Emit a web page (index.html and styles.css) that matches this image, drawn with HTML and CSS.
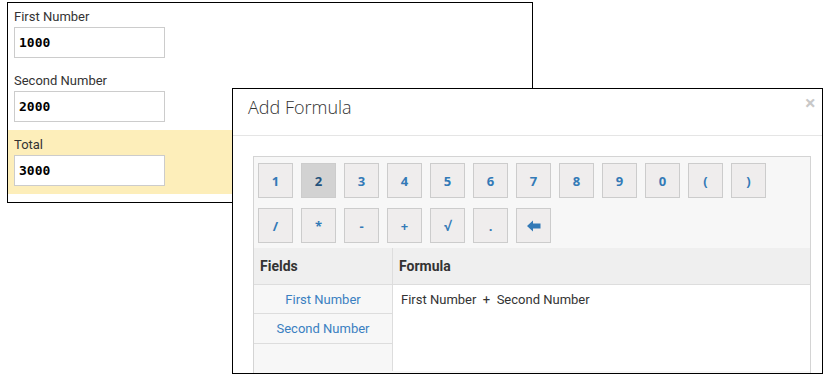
FILE: index.html
```html
<!DOCTYPE html>
<html lang="en">
<head>
    <meta charset="UTF-8">
    <title>Add Formula</title>
    <link rel="stylesheet" href="styles.css">
</head>
<body>
    <div class="form-panel">
        <div class="field">
            <label>First Number</label>
            <input type="text" value="1000">
        </div>
        <div class="field">
            <label>Second Number</label>
            <input type="text" value="2000">
        </div>
        <div class="field total">
            <label>Total</label>
            <input type="text" value="3000">
        </div>
    </div>

    <div class="modal">
        <div class="modal-header">
            <h4>Add Formula</h4>
            <span class="close">&times;</span>
        </div>
        <div class="modal-body">
            <div class="calc">
                <div class="keys">
                    <button>1</button>
                    <button class="active">2</button>
                    <button>3</button>
                    <button>4</button>
                    <button>5</button>
                    <button>6</button>
                    <button>7</button>
                    <button>8</button>
                    <button>9</button>
                    <button>0</button>
                    <button>(</button>
                    <button>)</button>
                </div>
                <div class="keys">
                    <button>/</button>
                    <button>*</button>
                    <button>-</button>
                    <button>+</button>
                    <button>&radic;</button>
                    <button>.</button>
                    <button class="back">
                        <svg width="14" height="12" viewBox="0 0 14 12"><path d="M0 6 L6 0.5 L6 3.5 L13.5 3.5 L13.5 8.5 L6 8.5 L6 11.5 Z" fill="#337ab7"/></svg>
                    </button>
                </div>
                <table class="formula-table">
                    <thead>
                        <tr>
                            <th class="col-fields">Fields</th>
                            <th>Formula</th>
                        </tr>
                    </thead>
                    <tbody>
                        <tr>
                            <td class="col-fields"><a href="#">First Number</a></td>
                            <td class="formula" rowspan="3">First Number&nbsp; + &nbsp;Second Number</td>
                        </tr>
                        <tr>
                            <td class="col-fields second"><a href="#">Second Number</a></td>
                        </tr>
                        <tr>
                            <td class="col-fields empty"></td>
                        </tr>
                    </tbody>
                </table>
            </div>
        </div>
    </div>
</body>
</html>
```

FILE: styles.css
```css
body {
    margin: 0;
    padding: 0;
    background: #fff;
    font-family: Roboto, "Liberation Sans", sans-serif;
    font-size: 13px;
    color: #333;
    width: 825px;
    height: 374px;
    overflow: hidden;
    position: relative;
}
.form-panel {
    margin: 2px 0 0 7px;
    width: 524px;
    border: 1px solid #000;
    padding-bottom: 8px;
}
.field {
    padding: 6px 6px 8px;
}
.field:first-child {
    padding-top: 5px;
}
.field label {
    display: block;
    line-height: 18px;
    margin-bottom: 1px;
}
.field input {
    display: block;
    box-sizing: border-box;
    width: 151px;
    height: 31px;
    border: 1px solid #ccc;
    padding: 0 4px;
    font-family: "DejaVu Sans Mono", "Liberation Mono", monospace;
    font-weight: bold;
    font-size: 13px;
    color: #000;
    outline: none;
}
.total {
    background-color: #fdeeba;
}

/* dialog lies over the form */
.modal {
    position: absolute;
    left: 232px;
    top: 88px;
    width: 589px;
    height: 284px;
    border: 1px solid #000;
    background: #fff;
    overflow: hidden;
}
.modal-header {
    position: relative;
    height: 46px;
    border-bottom: 1px solid #e5e5e5;
    padding: 0 15px;
}
.modal-header h4 {
    margin: 0;
    font-family: "Open Sans", sans-serif;
    font-weight: 300;
    font-size: 18px;
    line-height: 37px;
    color: #333;
}
.close {
    position: absolute;
    right: 6px;
    top: 0;
    font-family: "Open Sans", sans-serif;
    font-size: 20px;
    font-weight: bold;
    color: #c8c8c8;
}
.modal-body {
    padding: 20px 11px 0 20px;
}
.calc {
    border: 1px solid #d4d4d4;
    border-bottom: none;
    background: #f7f7f7;
    height: 217px;
}
.keys {
    display: flex;
    gap: 8px;
    padding: 6px 4px 0;
}
.keys + .keys {
    padding-top: 10px;
}
.keys button {
    width: 35px;
    height: 35px;
    margin: 0;
    padding: 0;
    border: 1px solid #ccc;
    background: #efeded;
    color: #337ab7;
    font-family: "Open Sans", sans-serif;
    font-weight: bold;
    font-size: 13px;
    cursor: pointer;
}
.keys button.active {
    background: #d2d2d2;
    color: #23527c;
}
.keys .back svg {
    display: block;
    margin: 1px auto 0;
}
.formula-table {
    width: 100%;
    margin-top: 5px;
    border-collapse: collapse;
    table-layout: fixed;
}
.formula-table th {
    height: 36px;
    padding: 0 6px;
    text-align: left;
    font-size: 14px;
    font-weight: bold;
    color: #333;
    background: #efefef;
    border-bottom: 1px solid #ddd;
}
.formula-table th + th {
    border-left: 1px solid #ddd;
}
th.col-fields {
    width: 126px;
}
.formula-table td {
    padding: 0;
}
td.col-fields {
    height: 28px;
    text-align: center;
    background: #f7f7f7;
    border-bottom: 1px solid #ddd;
}
td.second {
    height: 29px;
}
td.col-fields a {
    color: #3a7fc1;
    text-decoration: none;
}
td.empty {
    height: 27px;
    border-bottom: none;
}
td.formula {
    vertical-align: top;
    background: #fff;
    border-left: 1px solid #ddd;
    padding: 7px 8px;
}
```
